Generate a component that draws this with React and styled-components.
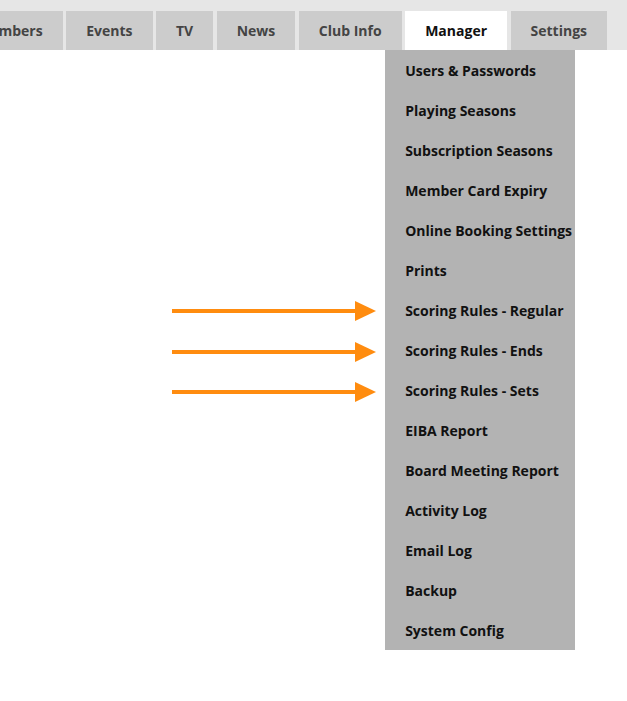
import React from "react";
import styled, { createGlobalStyle } from "styled-components";

const Global = createGlobalStyle`
  html, body { margin: 0; padding: 0; background: #fff; }
  body { font-family: "Open Sans", "Liberation Sans", sans-serif; }
`;

const Page = styled.div`
  position: relative;
  width: 627px;
  height: 701px;
  overflow: hidden;
  background: #fff;
`;

const NavBar = styled.nav`
  height: 50px;
  background: #e6e6e6;
  display: flex;
  justify-content: flex-end;
  align-items: flex-end;
  padding-right: 20px;
`;

const Tabs = styled.ul`
  list-style: none;
  margin: 0;
  padding: 0;
  display: flex;
  gap: 3.5px;
  flex-shrink: 0;
`;

const Tab = styled.li`
  position: relative;
  height: 39px;
  display: flex;
  align-items: center;
  padding: 0 20px;
  font-size: 14px;
  font-weight: 700;
  white-space: nowrap;
  background: ${(p) => (p.$active ? "#fff" : "#cccccc")};
  color: ${(p) => (p.$active ? "#111" : "#444")};
`;

const Menu = styled.ul`
  position: absolute;
  top: 39px;
  left: -20px;
  width: 190px;
  margin: 0;
  padding: 0;
  list-style: none;
  background: #b3b3b3;
  z-index: 2;
`;

const MenuItem = styled.li`
  height: 40px;
  display: flex;
  align-items: center;
  padding-left: 20px;
  font-size: 14px;
  font-weight: 700;
  color: #111;
  white-space: nowrap;
`;

/* Callout arrows pointing at the scoring-rule entries of the open menu */
const Callouts = styled.div`
  position: absolute;
  left: 172px;
  top: 301px;
  display: flex;
  flex-direction: column;
  gap: 20.5px;
`;

const ArrowSvg = styled.svg`
  display: block;
  width: 204px;
  height: 20px;
`;

const tabs = ["Members", "Events", "TV", "News", "Club Info", "Manager", "Settings"];

const items = [
  "Users & Passwords",
  "Playing Seasons",
  "Subscription Seasons",
  "Member Card Expiry",
  "Online Booking Settings",
  "Prints",
  "Scoring Rules - Regular",
  "Scoring Rules - Ends",
  "Scoring Rules - Sets",
  "EIBA Report",
  "Board Meeting Report",
  "Activity Log",
  "Email Log",
  "Backup",
  "System Config",
];

function Arrow() {
  return (
    <ArrowSvg viewBox="0 0 204 20">
      <rect x="0" y="8" width="186" height="4" fill="#ff8c0f" />
      <polygon points="183,0 204,10 183,20" fill="#ff8c0f" />
    </ArrowSvg>
  );
}

export default function App() {
  return (
    <Page>
      <Global />
      <NavBar>
        <Tabs>
          {tabs.map((t) => (
            <Tab key={t} $active={t === "Manager"}>
              {t}
              {t === "Manager" && (
                <Menu>
                  {items.map((i) => (
                    <MenuItem key={i}>{i}</MenuItem>
                  ))}
                </Menu>
              )}
            </Tab>
          ))}
        </Tabs>
      </NavBar>
      <Callouts>
        <Arrow />
        <Arrow />
        <Arrow />
      </Callouts>
    </Page>
  );
}
